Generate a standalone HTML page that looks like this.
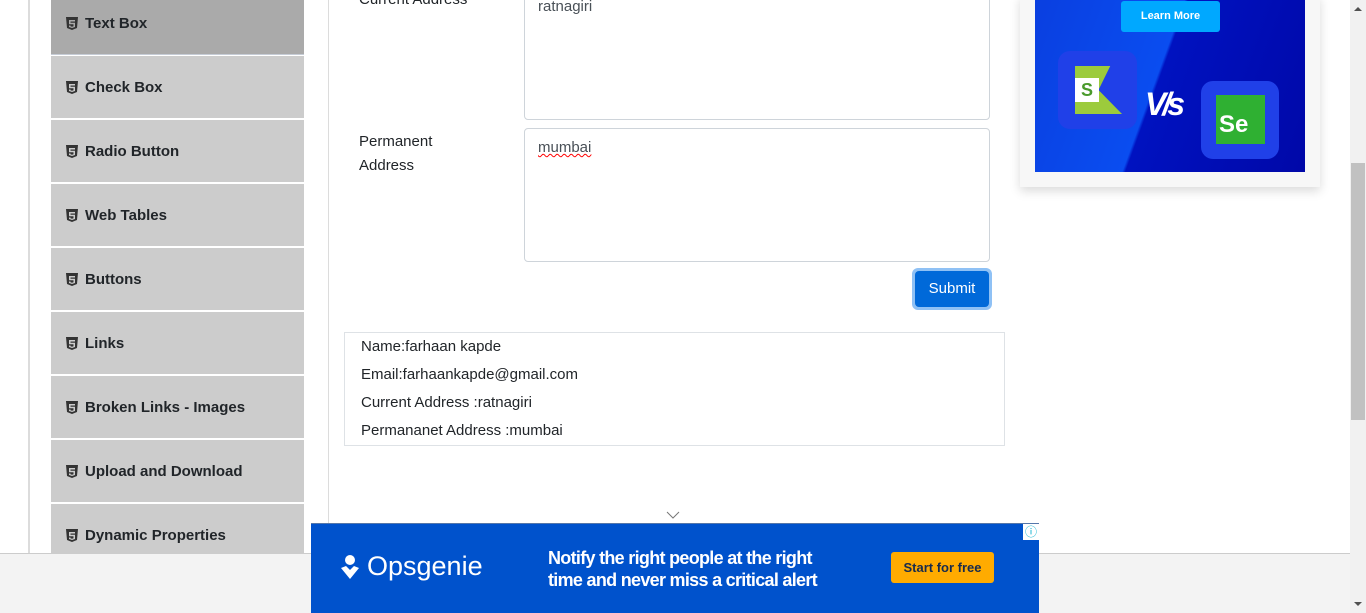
<!DOCTYPE html>
<html><head><meta charset="utf-8"><style>
*{box-sizing:border-box;margin:0;padding:0}
body{width:1366px;height:613px;overflow:hidden;background:#fff;font-family:"Liberation Sans",sans-serif;color:#212529;position:relative}
.a{position:absolute}
.item{position:absolute;left:51px;width:253px;height:62px;background:#ccc;font-weight:bold;font-size:15px;color:#212529;display:flex;align-items:center;padding-left:15px}
.item svg{margin-right:7px}
.lbl{font-size:15px;color:#212529}
.ta{position:absolute;left:524px;width:466px;border:1px solid #ced4da;border-radius:4px;font-size:15px;padding:10px 13px;color:#495057}
.out div{position:absolute;left:16px;font-size:15px}
</style></head><body>
<div class="a" style="left:28px;top:0;width:2px;height:553px;background:#dcdcdc"></div>
<div class="a" style="left:328px;top:0;width:1px;height:553px;background:#dcdcdc"></div>

<div class="item" style="top:-8px;height:63px;background:#aaa;border-bottom:1px solid #c6ccd6"><svg width="12" height="13" viewBox="0 0 12 13"><path d="M0 0h12l-1 11-5 2-5-2z" fill="#333"/><path d="M3 3h6v1.5H4.5v1.3H9V10l-3 1-3-1V8.5h1.5v.8L6 9.8l1.5-.5V7.3H3z" fill="#aaa"/></svg>Text Box</div>
<div class="item" style="top:56px"><svg width="12" height="13" viewBox="0 0 12 13"><path d="M0 0h12l-1 11-5 2-5-2z" fill="#333"/><path d="M3 3h6v1.5H4.5v1.3H9V10l-3 1-3-1V8.5h1.5v.8L6 9.8l1.5-.5V7.3H3z" fill="#ccc"/></svg>Check Box</div>
<div class="item" style="top:120px"><svg width="12" height="13" viewBox="0 0 12 13"><path d="M0 0h12l-1 11-5 2-5-2z" fill="#333"/><path d="M3 3h6v1.5H4.5v1.3H9V10l-3 1-3-1V8.5h1.5v.8L6 9.8l1.5-.5V7.3H3z" fill="#ccc"/></svg>Radio Button</div>
<div class="item" style="top:184px"><svg width="12" height="13" viewBox="0 0 12 13"><path d="M0 0h12l-1 11-5 2-5-2z" fill="#333"/><path d="M3 3h6v1.5H4.5v1.3H9V10l-3 1-3-1V8.5h1.5v.8L6 9.8l1.5-.5V7.3H3z" fill="#ccc"/></svg>Web Tables</div>
<div class="item" style="top:248px"><svg width="12" height="13" viewBox="0 0 12 13"><path d="M0 0h12l-1 11-5 2-5-2z" fill="#333"/><path d="M3 3h6v1.5H4.5v1.3H9V10l-3 1-3-1V8.5h1.5v.8L6 9.8l1.5-.5V7.3H3z" fill="#ccc"/></svg>Buttons</div>
<div class="item" style="top:312px"><svg width="12" height="13" viewBox="0 0 12 13"><path d="M0 0h12l-1 11-5 2-5-2z" fill="#333"/><path d="M3 3h6v1.5H4.5v1.3H9V10l-3 1-3-1V8.5h1.5v.8L6 9.8l1.5-.5V7.3H3z" fill="#ccc"/></svg>Links</div>
<div class="item" style="top:376px"><svg width="12" height="13" viewBox="0 0 12 13"><path d="M0 0h12l-1 11-5 2-5-2z" fill="#333"/><path d="M3 3h6v1.5H4.5v1.3H9V10l-3 1-3-1V8.5h1.5v.8L6 9.8l1.5-.5V7.3H3z" fill="#ccc"/></svg>Broken Links - Images</div>
<div class="item" style="top:440px"><svg width="12" height="13" viewBox="0 0 12 13"><path d="M0 0h12l-1 11-5 2-5-2z" fill="#333"/><path d="M3 3h6v1.5H4.5v1.3H9V10l-3 1-3-1V8.5h1.5v.8L6 9.8l1.5-.5V7.3H3z" fill="#ccc"/></svg>Upload and Download</div>
<div class="item" style="top:504px"><svg width="12" height="13" viewBox="0 0 12 13"><path d="M0 0h12l-1 11-5 2-5-2z" fill="#333"/><path d="M3 3h6v1.5H4.5v1.3H9V10l-3 1-3-1V8.5h1.5v.8L6 9.8l1.5-.5V7.3H3z" fill="#ccc"/></svg>Dynamic Properties</div>

<div class="a lbl" style="left:359px;top:-9px">Current Address</div>
<div class="ta" style="top:-20px;height:140px;padding-top:17px">ratnagiri</div>
<div class="a lbl" style="left:359px;top:130px;line-height:24px">Permanent<br>Address</div>
<div class="ta" style="top:128px;height:134px"><span style="text-decoration:underline wavy red;text-decoration-thickness:1px">mumbai</span></div>
<div class="a" style="left:912px;top:268px;width:80px;height:42px;border-radius:6px;background:#8fc1f5"></div>
<div class="a" style="left:915px;top:271px;width:74px;height:36px;border-radius:4px;background:#0069d9;color:#fff;font-size:15px;text-align:center;line-height:36px">Submit</div>

<div class="a out" style="left:344px;top:332px;width:661px;height:114px;border:1px solid #dee2e6">
<div style="top:5px">Name:farhaan kapde</div>
<div style="top:33px">Email:farhaankapde@gmail.com</div>
<div style="top:61px">Current Address :ratnagiri</div>
<div style="top:89px">Permananet Address :mumbai</div>
</div>

<div class="a" style="left:1020px;top:-5px;width:300px;height:192px;background:#f7f7f7;box-shadow:0 4px 10px rgba(0,0,0,.15)"></div>
<div class="a" style="left:1035px;top:0;width:270px;height:172px;background:linear-gradient(110deg,#0a3fe0 0%,#0a4df0 45%,#0012c0 46%,#0008a8 100%);overflow:hidden">
 <div class="a" style="left:86px;top:1px;width:99px;height:31px;background:#00a8ff;border-radius:3px;color:#fff;font-weight:bold;font-size:11px;text-align:center;line-height:31px">Learn More</div>
 <div class="a" style="left:23px;top:51px;width:79px;height:78px;background:#2040e8;border-radius:12px"></div>
 <div class="a" style="left:40px;top:66px;width:47px;height:48px;background:#9ccb3c;clip-path:polygon(0 0,75% 0,50% 50%,100% 100%,0 100%)"></div>
 <div class="a" style="left:40px;top:78px;width:24px;height:24px;background:#fff;color:#4a9a2c;font-weight:bold;font-size:18px;text-align:center;line-height:24px">S</div>
 <div class="a" style="left:110px;top:86px;color:#fff;font-weight:bold;font-size:32px;font-style:italic;letter-spacing:-4px">V/s</div>
 <div class="a" style="left:166px;top:81px;width:78px;height:78px;background:#2040e8;border-radius:12px"></div>
 <div class="a" style="left:181px;top:95px;width:49px;height:49px;background:#2fb032;color:#fff;font-weight:bold;font-size:24px;padding:16px 0 0 3px">Se</div>
</div>

<div class="a" style="left:0;top:553px;width:1350px;height:60px;background:#f3f3f3;border-top:1px solid #ccc"></div>
<div class="a" style="left:1350px;top:0;width:16px;height:613px;background:#f1f1f1"></div>
<div class="a" style="left:1351px;top:163px;width:14px;height:257px;background:#c1c1c1"></div>
<div class="a" style="left:1354px;top:602px;width:0;height:0;border-left:4px solid transparent;border-right:4px solid transparent;border-top:4px solid #505050"></div>
<div class="a" style="left:1354px;top:7px;width:0;height:0;border-left:4px solid transparent;border-right:4px solid transparent;border-bottom:4px solid #505050"></div>

<svg class="a" style="left:666px;top:511px" width="14" height="8"><path d="M1 1l6 6 6-6" stroke="#777" fill="none"/></svg>

<div class="a" style="left:311px;top:523px;width:728px;height:90px;background:#0052cc;border-top:1px solid #5577aa">
 <div class="a" style="left:712px;top:0;width:16px;height:16px;background:#fff;color:#00aecd;font-size:12px;text-align:center;line-height:16px">ⓘ</div>
 <svg class="a" style="left:29px;top:30px" width="20" height="26" viewBox="0 0 20 26"><circle cx="10" cy="6" r="5" fill="#fff"/><path d="M1 14l9 11 9-11-5-2-4 4-4-4z" fill="#fff"/></svg>
 <div class="a" style="left:56px;top:27px;color:#fff;font-size:27px">Opsgenie</div>
 <div class="a" style="left:237px;top:23px;color:#fff;font-size:18px;font-weight:bold;line-height:22px;letter-spacing:-0.7px">Notify the right people at the right<br>time and never miss a critical alert</div>
 <div class="a" style="left:580px;top:28px;width:103px;height:31px;background:#ffab00;border-radius:3px;color:#172b4d;font-weight:bold;font-size:13px;text-align:center;line-height:31px">Start for free</div>
</div>
</body></html>
